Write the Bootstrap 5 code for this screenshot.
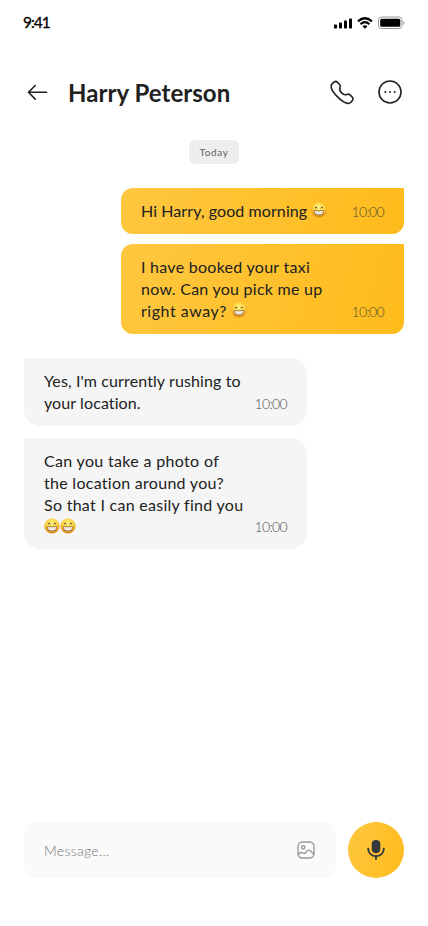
<!DOCTYPE html>
<html lang="en">
<head>
<meta charset="utf-8">
<meta name="viewport" content="width=device-width, initial-scale=1">
<title>Harry Peterson</title>
<link href="https://cdn.jsdelivr.net/npm/bootstrap@5.3.0/dist/css/bootstrap.min.css" rel="stylesheet">
<style>
body{font-family:Lato,"Liberation Sans",sans-serif;color:#212121;width:428px;height:926px;overflow:hidden;background:#fff}
svg{display:block;flex:none}
.status-bar{height:44px;padding:1px 23px 0;color:#000}
.clock{font-size:15.500px;letter-spacing:-1px;-webkit-text-stroke:.3px #000}
.chat-head{height:96px;padding:0 24px}
.chat-name{font-size:24px;line-height:29px;font-weight:700;margin:0 0 0 16px;letter-spacing:.05px}
.day-chip{height:24px;width:50px;background:#eee;border-radius:6px;font-size:10px;color:#616161;letter-spacing:.6px;padding-top:1px}
.bubble{width:283px;padding:12px 20px;font-size:16px;line-height:22px;white-space:nowrap;font-variant-ligatures:no-common-ligatures}
.sent{background:linear-gradient(286deg,#febb1b,#ffc740);border-radius:12px 0 12px 12px}
.received{background:#f5f5f5;border-radius:0 16px 16px 16px}
.received.tall{height:111px}
.gap-after-first{margin-bottom:10px}
.gap-after-third{margin-bottom:12px}
.time{font-size:14px;font-weight:300;line-height:20px;color:#505050;letter-spacing:-.7px;margin-right:.1px}
.sent .time{color:#5b4f35}
.grin{width:16px;height:16px;display:inline-block;vertical-align:-1px}
.l1{letter-spacing:.08px}.l2{letter-spacing:.27px}.l3{letter-spacing:.25px}.l4{letter-spacing:.53px}.l5{letter-spacing:.11px}
.l6{letter-spacing:.1px}.l7{letter-spacing:.33px}.l8{letter-spacing:.28px}.l9{letter-spacing:.28px}
.grin-row{height:20px}
.composer{padding:0 24px 48px}
.field{height:56px;width:312px;background:#fafafa;border-radius:12px;padding:0 20px;font-size:14px;font-weight:300;color:#757575}
.hint{letter-spacing:.3px}
.mic{width:56px;height:56px;background:linear-gradient(286deg,#febb1b,#ffc740)}
</style>
<script src="https://cdn.jsdelivr.net/npm/bootstrap@5.3.0/dist/js/bootstrap.bundle.min.js"></script>
</head>
<body class="d-flex flex-column">
<svg width="0" height="0" class="position-absolute" aria-hidden="true">
<defs>
<radialGradient id="face" cx=".5" cy=".35" r=".68"><stop offset="0" stop-color="#fff48a"/><stop offset=".55" stop-color="#fcd33f"/><stop offset=".8" stop-color="#ee9f20"/><stop offset="1" stop-color="#c9700f"/></radialGradient>
<symbol id="grin" viewBox="0 0 16 16"><circle cx="8" cy="8" r="7.600" fill="url(#face)"/><path d="M4.200 5.900q1-1.800 2 0M9.800 5.900q1-1.800 2 0" fill="none" stroke="#5a3010" stroke-width="1" stroke-linecap="round"/><path d="M2.800 8.200q5.200.8 10.400 0c0 3.600-2.200 5.200-5.200 5.200s-5.200-1.600-5.200-5.200z" fill="#7c4c1c"/><path d="M3.400 8.900q4.600.7 9.200 0c-.2 2.600-2 3.700-4.600 3.700S3.600 11.500 3.400 8.900z" fill="#fff"/><path d="M3.700 10.700q4.300.6 8.600 0" fill="none" stroke="#b6a68d" stroke-width=".5"/></symbol>
</defs>
</svg>
<div class="status-bar d-flex align-items-center justify-content-between">
<span class="clock">9:41</span>
<svg width="72" height="14" viewBox="0 0 72 14"><g><rect x="1" y="8.500" width="3" height="4" rx=".8"/><rect x="6" y="6.500" width="3" height="6" rx=".8"/><rect x="11" y="4.500" width="3" height="8" rx=".8"/><rect x="16" y="2.500" width="3" height="10" rx=".8"/></g><path d="M25 5.300Q31.700-.7 38.900 5.300" fill="none" stroke="#000" stroke-width="2.300"/><path d="M27.500 8.200Q31.900 4.200 36.400 8.200" fill="none" stroke="#000" stroke-width="2.100"/><path d="M29.500 10.200q2.400-1.800 4.900 0L31.950 12.800z"/><rect x="45.500" y="1" width="23.500" height="11.500" rx="3" fill="none" stroke="#999"/><rect x="47.200" y="2.700" width="20.100" height="8.100" rx="1.600"/><path d="M70.300 5v4q1.200-.6 1.200-2t-1.200-2z" fill="#999"/></svg>
</div>
<header class="chat-head d-flex align-items-center">
<svg width="28" height="28" viewBox="0 0 28 28" fill="none" stroke="#212121" stroke-width="1.600" stroke-linecap="round" stroke-linejoin="round"><path d="M22.600 14.300H4.600M11.200 7.500L4.500 14.300l6.700 6.800"/></svg>
<h1 class="chat-name">Harry Peterson</h1>
<div class="d-flex ms-auto gap-4">
<svg width="24" height="28" viewBox="-.5 0 24 28" class="overflow-visible" fill="none" stroke="#212121" stroke-width="1.600" stroke-linejoin="round"><path d="M13.100 14.900c4.600 4.600 5.600-.8 8.500 2.100 2.900 2.800 4.500 3.400.9 7.100-.5.400-3.400 4.800-13.400-5.200C-.9 8.900 3.500 6 3.900 5.500c3.700-3.700 4.200-2 7.100.8 2.800 2.900-2.500 4 2.100 8.600z"/></svg>
<svg width="28" height="28" viewBox="0 0 28 28"><circle cx="14" cy="14" r="11" fill="none" stroke="#212121" stroke-width="1.600"/><g fill="#212121"><circle cx="9.300" cy="14" r="1"/><circle cx="14" cy="14" r="1"/><circle cx="18.700" cy="14" r="1"/></g></svg>
</div>
</header>
<main class="d-flex flex-column px-4 flex-grow-1">
<div class="day-chip d-flex align-items-center justify-content-center align-self-center mb-4">Today</div>
<div class="bubble sent gap-after-first d-flex align-items-end justify-content-between align-self-end"><div><span class="l1">Hi Harry, good morning</span> <svg class="grin"><use href="#grin"/></svg></div><span class="time">10:00</span></div>
<div class="bubble sent d-flex align-items-end justify-content-between align-self-end mb-4"><div><span class="l2">I have booked your taxi</span><br><span class="l3">now. Can you pick me up</span><br><span class="l4">right away?</span> <svg class="grin"><use href="#grin"/></svg></div><span class="time">10:00</span></div>
<div class="bubble received gap-after-third d-flex align-items-end justify-content-between"><div><span class="l5">Yes, I'm currently rushing to</span><br><span class="l6">your location.</span></div><span class="time">10:00</span></div>
<div class="bubble received tall d-flex align-items-end justify-content-between"><div class="align-self-start"><span class="l7">Can you take a photo of</span><br><span class="l8">the location around you?</span><br><span class="l9">So that I can easily find you</span><br><span class="grin-row d-flex align-items-center"><svg class="grin"><use href="#grin"/></svg><svg class="grin"><use href="#grin"/></svg></span></div><span class="time">10:00</span></div>
</main>
<footer class="composer d-flex justify-content-between">
<div class="field d-flex align-items-center justify-content-between"><span class="hint">Message...</span>
<svg width="20" height="20" viewBox="0 0 20 20" fill="none" stroke="#999" stroke-width="1.400" stroke-linecap="round" stroke-linejoin="round"><rect x="2" y="2" width="16" height="16" rx="4.500"/><circle cx="7.200" cy="7.300" r="1.700"/><path d="M2.400 14.300c1.500-2 2.700-2.400 4.300-1.300 1.500 1 2.300.5 3.300-.8 1.500-2.300 2.800-2.700 4.500-1.200l3.300 3"/></svg></div>
<div class="mic rounded-circle d-flex align-items-center justify-content-center"><svg width="24" height="24" viewBox="0 0 24 24"><rect x="7.700" y="2" width="8.600" height="13.200" rx="4.100" fill="#35383f"/><path d="M4.200 10.800c.2 4.500 3.400 7.300 7.800 7.300s7.600-2.800 7.800-7.300M12 18.200V21" fill="none" stroke="#35383f" stroke-width="1.900" stroke-linecap="round"/></svg></div>
</footer>
</body>
</html>
